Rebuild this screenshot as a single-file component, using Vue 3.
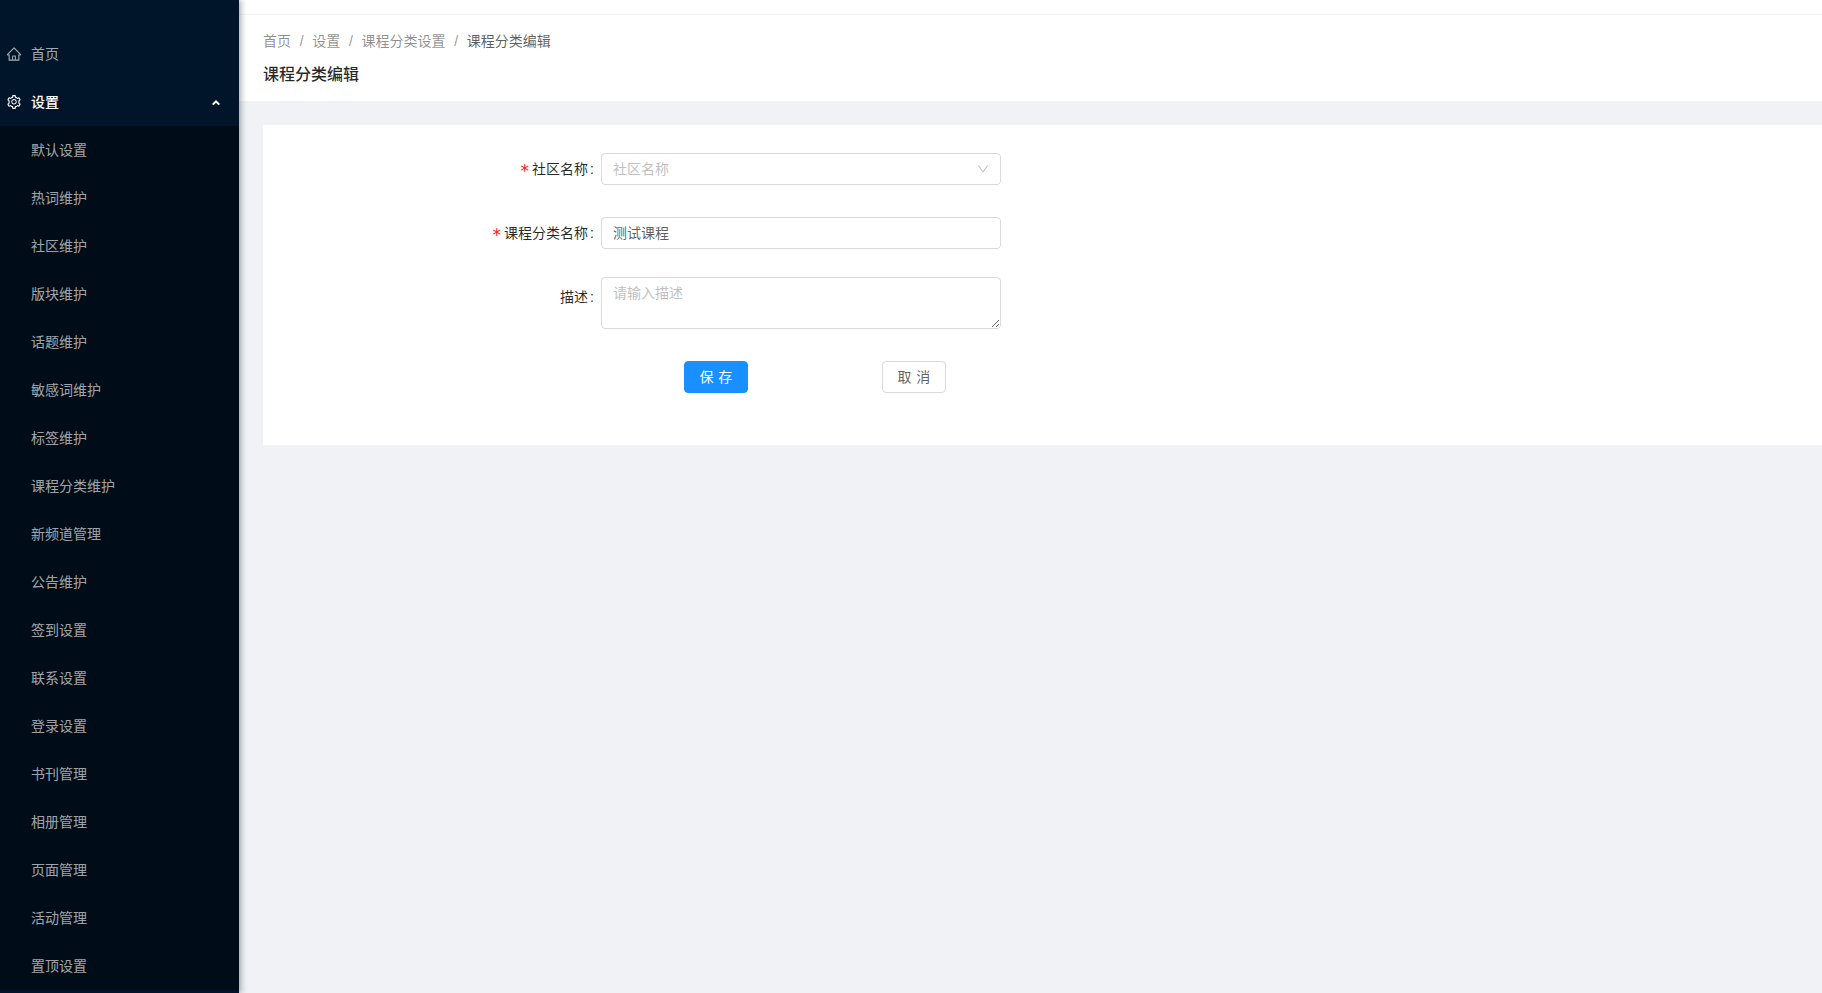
<script setup>
const subItems = [
  '默认设置', '热词维护', '社区维护', '版块维护', '话题维护', '敏感词维护',
  '标签维护', '课程分类维护', '新频道管理', '公告维护', '签到设置', '联系设置',
  '登录设置', '书刊管理', '相册管理', '页面管理', '活动管理', '置顶设置'
]
const crumbs = ['首页', '设置', '课程分类设置']
</script>

<template>
  <div class="layout">
    <aside class="sider">
      <div class="menu-item">
        <svg class="menu-icon" viewBox="64 64 896 896" fill="currentColor"><path d="M946.5 505L560.1 118.8l-25.9-25.9a31.5 31.5 0 0 0-44.4 0L77.5 505a63.9 63.9 0 0 0-18.8 46c.4 35.2 29.7 63.3 64.9 63.3h42.5V940h691.8V614.3h43.4c17.1 0 33.2-6.7 45.3-18.8a63.6 63.6 0 0 0 18.7-45.3c0-17-6.7-33.1-18.8-45.2zM568 868H456V664h112v204zm217.9-325.7V868H632V640c0-22.1-17.9-40-40-40H432c-22.1 0-40 17.9-40 40v228H238.1V542.3h-96l370-369.7 23.1 23.1L882 542.3h-96.1z"/></svg>
        <span>首页</span>
      </div>
      <div class="menu-item menu-open">
        <svg class="menu-icon" viewBox="64 64 896 896" fill="currentColor"><path d="M924.8 625.7l-65.5-56c3.1-19 4.7-38.4 4.7-57.8s-1.6-38.8-4.7-57.8l65.5-56a32.03 32.03 0 0 0 9.3-35.2l-.9-2.6a443.74 443.74 0 0 0-79.7-137.9l-1.8-2.1a32.12 32.12 0 0 0-35.1-9.5l-81.3 28.9c-30-24.6-63.5-44-99.7-57.6l-15.7-85a32.05 32.05 0 0 0-25.8-25.7l-2.7-.5c-52.1-9.4-106.9-9.4-159 0l-2.7.5a32.05 32.05 0 0 0-25.8 25.7l-15.8 85.4a351.86 351.86 0 0 0-99 57.4l-81.9-29.1a32 32 0 0 0-35.1 9.5l-1.8 2.1a446.02 446.02 0 0 0-79.7 137.9l-.9 2.6c-4.5 12.5-.8 26.5 9.3 35.2l66.3 56.6c-3.1 18.8-4.6 38-4.6 57.1 0 19.2 1.5 38.4 4.6 57.1L99 625.5a32.03 32.03 0 0 0-9.3 35.2l.9 2.6c18.1 50.4 44.9 96.9 79.7 137.9l1.8 2.1a32.12 32.12 0 0 0 35.1 9.5l81.9-29.1c29.8 24.5 63.1 43.9 99 57.4l15.8 85.4a32.05 32.05 0 0 0 25.8 25.7l2.7.5a449.4 449.4 0 0 0 159 0l2.7-.5a32.05 32.05 0 0 0 25.8-25.7l15.7-85a350 350 0 0 0 99.7-57.6l81.3 28.9a32 32 0 0 0 35.1-9.5l1.8-2.1c34.8-41.1 61.6-87.5 79.7-137.9l.9-2.6c4.5-12.3.8-26.3-9.3-35zM788.3 465.9c2.5 15.1 3.8 30.6 3.8 46.1s-1.3 31-3.8 46.1l-6.6 40.1 74.7 63.9a370.03 370.03 0 0 1-42.6 73.6L721 702.8l-31.4 25.8c-23.9 19.6-50.5 35-79.3 45.8l-38.1 14.3-17.9 97a377.5 377.5 0 0 1-85 0l-17.9-97.2-37.8-14.5c-28.5-10.8-55-26.2-78.7-45.7l-31.4-25.9-93.4 33.2c-17-22.9-31.2-47.6-42.6-73.6l75.5-64.5-6.5-40c-2.4-14.9-3.7-30.3-3.7-45.5 0-15.3 1.2-30.6 3.7-45.5l6.5-40-75.5-64.5c11.3-26.1 25.6-50.7 42.6-73.6l93.4 33.2 31.4-25.9c23.7-19.5 50.2-34.9 78.7-45.7l37.9-14.3 17.9-97.2c28.1-3.2 56.8-3.2 85 0l17.9 97 38.1 14.3c28.7 10.8 55.4 26.2 79.3 45.8l31.4 25.8 92.8-32.9c17 22.9 31.2 47.6 42.6 73.6L781.8 426l6.5 39.9zM512 326c-97.2 0-176 78.8-176 176s78.8 176 176 176 176-78.8 176-176-78.8-176-176-176zm79.2 255.2A111.6 111.6 0 0 1 512 614c-29.9 0-58-11.7-79.2-32.8A111.6 111.6 0 0 1 400 502c0-29.9 11.7-58 32.8-79.2C454 401.6 482.1 390 512 390c29.9 0 58 11.6 79.2 32.8A111.6 111.6 0 0 1 624 502c0 29.9-11.7 58-32.8 79.2z"/></svg>
        <span>设置</span>
        <svg class="menu-caret" viewBox="0 0 8 5" fill="none" stroke="currentColor" stroke-width="2"><path d="M.7 4.6L4 1.4l3.3 3.2"/></svg>
      </div>
      <ul class="submenu">
        <li v-for="item in subItems" :key="item" class="sub-item">{{ item }}</li>
      </ul>
    </aside>

    <main class="main">
      <div class="topbar"></div>
      <header class="page-header">
        <nav class="breadcrumb">
          <template v-for="c in crumbs" :key="c">
            <span class="crumb">{{ c }}</span><span class="sep">/</span>
          </template>
          <span class="crumb-last">课程分类编辑</span>
        </nav>
        <h1 class="page-title">课程分类编辑</h1>
      </header>
      <section class="content">
        <form class="card">
          <div class="row row-a">
            <label class="label"><span class="req">*</span>社区名称<span class="colon">:</span></label>
            <div class="control select">
              <span class="select-ph">社区名称</span>
              <svg class="select-arrow" viewBox="64 64 896 896" fill="currentColor"><path d="M884 256h-75c-5.1 0-9.9 2.5-12.9 6.6L512 654.2 227.9 262.6c-3-4.1-7.8-6.6-12.9-6.6h-75c-6.5 0-10.3 7.4-6.5 12.7l352.6 486.1c12.8 17.6 39 17.6 51.7 0l352.6-486.1c3.9-5.3.1-12.7-6.4-12.7z"/></svg>
            </div>
          </div>
          <div class="row row-b">
            <label class="label"><span class="req">*</span>课程分类名称<span class="colon">:</span></label>
            <input class="control input" value="测试课程" />
          </div>
          <div class="row row-c">
            <label class="label label-tall">描述<span class="colon">:</span></label>
            <textarea class="control textarea" placeholder="请输入描述"></textarea>
          </div>
          <div class="actions">
            <button type="button" class="btn btn-primary">保存</button>
            <button type="button" class="btn btn-default">取消</button>
          </div>
        </form>
      </section>
    </main>
  </div>
</template>

<style>
html, body { margin: 0; padding: 0; background: #f0f2f5; overflow: hidden; }
</style>

<style scoped>
.layout {
  display: flex;
  height: 100vh;
  overflow: hidden;
  font-family: "Liberation Sans", "Noto Sans CJK SC", sans-serif;
  font-size: 14px;
  line-height: 22px;
  color: rgba(0, 0, 0, 0.65);
}
.sider {
  position: relative;
  z-index: 2;
  flex: 0 0 239px;
  width: 239px;
  padding-top: 30px;
  box-sizing: border-box;
  background: #001529;
  box-shadow: 2px 0 6px rgba(0, 21, 41, 0.35);
  overflow: hidden;
}
.menu-item {
  display: flex;
  align-items: center;
  height: 48px;
  padding-left: 7px;
  color: rgba(255, 255, 255, 0.65);
}
.menu-open { color: #fff; font-weight: 500; }
.menu-icon { width: 14px; height: 14px; margin-right: 10px; flex: none; }
.menu-caret { width: 8px; height: 5px; margin-left: auto; margin-right: 19px; flex: none; }
.submenu {
  list-style: none;
  margin: 0;
  padding: 0;
  background: #000c17;
}
.sub-item {
  height: 48px;
  line-height: 48px;
  padding-left: 31px;
  color: rgba(255, 255, 255, 0.65);
}
.main {
  flex: 1;
  min-width: 0;
  display: flex;
  flex-direction: column;
  background: #f0f2f5;
}
.topbar {
  height: 14px;
  background: #fff;
  border-bottom: 1px solid #f2f2f2;
  flex: none;
}
.page-header {
  flex: none;
  height: 86px;
  box-sizing: border-box;
  padding: 15px 24px 0;
  background: #fff;
}
.breadcrumb { height: 22px; color: rgba(0, 0, 0, 0.45); white-space: nowrap; }
.sep { margin: 0 8.7px; }
.crumb-last { color: rgba(0, 0, 0, 0.65); }
.page-title {
  margin: 11px 0 0;
  font-size: 16px;
  line-height: 24px;
  font-weight: 500;
  color: rgba(0, 0, 0, 0.85);
}
.content { flex: 1; padding: 24px 0 0 24px; }
.card {
  background: #fff;
  padding: 28px 0 52px;
}
.row { display: flex; align-items: flex-start; }
.row-a { margin-bottom: 32px; }
.row-b { margin-bottom: 28px; }
.row-c { margin-bottom: 32px; }
.label {
  width: 338px;
  height: 32px;
  flex: none;
  text-align: right;
  line-height: 32px;
  color: rgba(0, 0, 0, 0.85);
}
.label-tall { line-height: 40px; }
.req {
  color: #f5222d;
  font-family: "DejaVu Sans", sans-serif;
  font-size: 17px;
  line-height: 1;
  margin-right: 3px;
  vertical-align: -3px;
}
.colon { margin: 0 7px 0 2px; }
.control {
  display: block;
  width: 400px;
  box-sizing: border-box;
  border: 1px solid #d9d9d9;
  border-radius: 4px;
  background: #fff;
  font: inherit;
  color: rgba(0, 0, 0, 0.65);
  outline: none;
}
.select {
  display: flex;
  align-items: center;
  justify-content: space-between;
  height: 32px;
  padding: 0 11px;
}
.select-ph { color: #bfbfbf; }
.select-arrow { width: 12px; height: 12px; color: #bfbfbf; }
.input { height: 32px; padding: 3px 11px 5px; }
.textarea {
  height: 52px;
  padding: 5px 11px 3px;
  line-height: 21px;
  resize: vertical;
}
.textarea::placeholder { color: #bfbfbf; opacity: 1; }
.actions { display: flex; gap: 134px; padding-left: 421px; }
.btn {
  width: 64px;
  height: 32px;
  padding: 0;
  border-radius: 4px;
  font: inherit;
  letter-spacing: 0.34em;
  text-indent: 0.34em;
  box-sizing: border-box;
}
.btn-primary { background: #1890ff; border: 1px solid #1890ff; color: #fff; }
.btn-default { background: #fff; border: 1px solid #d9d9d9; color: rgba(0, 0, 0, 0.65); }
</style>
